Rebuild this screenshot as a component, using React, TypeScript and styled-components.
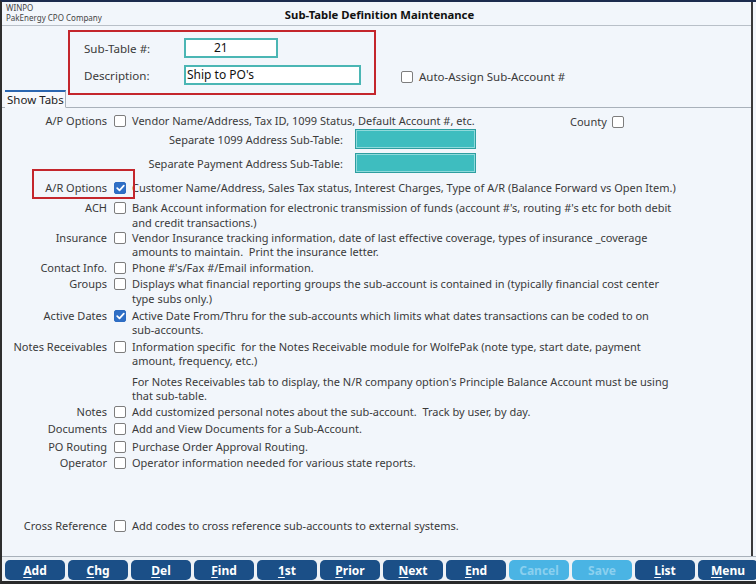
import React from 'react';
import styled, { createGlobalStyle } from 'styled-components';

const GlobalStyle = createGlobalStyle`
  html, body {
    margin: 0;
    padding: 0;
    background: #e9ecef;
  }
  body {
    font-family: "Noto Sans", "Open Sans", sans-serif;
    font-size: 11px;
    color: #3a3a3a;
  }
`;

const Window = styled.div`
  width: 756px;
  height: 584px;
  display: flex;
  flex-direction: column;
  box-sizing: border-box;
  border-top: 2px solid #1c2c4e;
  border-left: 2px solid #2e2e2e;
  border-bottom: 3px solid #2a2a2a;
  background: #f2f6fb;
  overflow: hidden;
`;

const Pane = styled.div`
  flex: 1;
  display: flex;
  flex-direction: column;
  width: 749px;
  border-right: 2px solid #3a3a3a;
  background: #f2f6fb;
`;

const Header = styled.div`
  height: 23px;
  position: relative;
  display: flex;
  align-items: center;
  justify-content: center;
  border-bottom: 1px solid #b9c0c8;
`;

const Company = styled.div`
  position: absolute;
  left: 4px;
  top: 1px;
  font-size: 8px;
  line-height: 10px;
  color: #444;
`;

const Title = styled.div`
  font-weight: 700;
  font-size: 11.3px;
  color: #111;
  margin: 2px 0 0 6px;
`;

const TopArea = styled.div`
  height: 81px;
  display: flex;
  align-items: flex-start;
  border-bottom: 1px solid #a9b1ba;
`;

const Tab = styled.div`
  align-self: flex-end;
  margin-left: 3px;
  margin-bottom: -1px;
  width: 61px;
  height: 18px;
  box-sizing: border-box;
  border-top: 2px solid #2a66b0;
  border-right: 1px solid #a9b1ba;
  border-bottom: 1px solid #f2f6fb;
  background: #f7f9fc;
  font-size: 11.5px;
  line-height: 16px;
  padding-left: 2px;
  color: #222;
`;

const HighlightBox = styled.div`
  margin: 4px 0 0 2px;
  width: 308px;
  height: 65px;
  box-sizing: border-box;
  border: 2px solid #c4262c;
  padding: 6px 0 0 14px;
  display: grid;
  grid-template-columns: 100px auto;
  grid-auto-rows: 20px;
  row-gap: 7px;
  align-items: center;
`;

const FieldLabel = styled.span`
  font-size: 11.6px;
  color: #3a3a3a;
`;

const TextInput = styled.div<{ $w: number; $center?: boolean }>`
  width: ${p => p.$w}px;
  height: 20px;
  box-sizing: border-box;
  border: 2px solid #4bb6b4;
  background: #fff;
  font-size: 12px;
  line-height: 16px;
  padding-left: ${p => (p.$center ? '28px' : '1px')};
  color: #111;
`;

const AutoAssign = styled.label`
  margin: 43px 0 0 25px;
  display: flex;
  align-items: center;
  gap: 6px;
  font-size: 11.5px;
  color: #3a3a3a;
`;

const Content = styled.div`
  flex: 1;
  display: flex;
  flex-direction: column;
`;

const Row = styled.div<{ $mt: number }>`
  position: relative;
  margin-top: ${p => p.$mt}px;
  display: grid;
  grid-template-columns: 106px 12px auto;
  column-gap: 6px;
  align-items: start;
  line-height: 14.5px;
`;

const Label = styled.span`
  text-align: right;
  white-space: nowrap;
  padding-right: 1px;
`;

const Desc = styled.span`
  white-space: pre;
`;

const BoxCell = styled.span`
  display: flex;
  height: 14.5px;
  align-items: center;
`;

const Box = styled.span<{ $on?: boolean }>`
  width: 12px;
  height: 12px;
  box-sizing: border-box;
  border-radius: 2px;
  border: 1px solid ${p => (p.$on ? '#2d6cc2' : '#7d7d7d')};
  background: ${p => (p.$on ? '#2f6fc6' : '#fff')};
  display: flex;
  align-items: center;
  justify-content: center;
  flex-shrink: 0;
`;

const County = styled.span`
  position: absolute;
  left: 568px;
  top: 1px;
  display: flex;
  align-items: center;
  gap: 5px;
`;

const SubTableRow = styled.div<{ $mt: number }>`
  margin-top: ${p => p.$mt}px;
  display: grid;
  grid-template-columns: 341px 121px;
  column-gap: 12px;
  align-items: center;
  height: 20px;
`;

const SubLabel = styled.span`
  text-align: right;
  font-size: 11px;
`;

const TealField = styled.div`
  height: 20px;
  box-sizing: border-box;
  background: #3ebdbf;
  border: 2px solid #8fdadb;
  outline: 1px solid #2e9ea0;
  outline-offset: -1px;
`;

const RedMark = styled.div`
  position: absolute;
  left: 30px;
  top: -12px;
  width: 103px;
  height: 30px;
  box-sizing: border-box;
  border: 2px solid #c4262c;
  pointer-events: none;
`;

const Footer = styled.div`
  height: 25px;
  border-top: 1px solid #a9b1ba;
  background: #eef2f6;
  display: flex;
  gap: 3px;
  padding: 3px 0 0 3px;
  box-sizing: border-box;
`;

const Btn = styled.div<{ $off?: boolean }>`
  flex: 0 0 60px;
  height: 20px;
  border-radius: 5px;
  background: ${p => (p.$off ? '#4ab4e4' : '#1b4f87')};
  color: ${p => (p.$off ? '#8bd0ef' : '#fff')};
  font-weight: 700;
  font-size: 12px;
  line-height: 21px;
  text-align: center;
  u { text-decoration-thickness: 1px; text-underline-offset: 2px; }
`;

const Check = () => (
  <svg width="9" height="8" viewBox="0 0 9 8">
    <path d="M1.2 4.2 L3.5 6.4 L7.8 1.6" fill="none" stroke="#fff" strokeWidth="1.7" strokeLinecap="round" strokeLinejoin="round" />
  </svg>
);

const CheckBox = ({ on }: { on?: boolean }) => <Box $on={on}>{on && <Check />}</Box>;

type Opt = { mt: number; label: string; text: string; on?: boolean; box?: boolean };

const options: Opt[] = [
  { mt: 8, label: 'A/R Options', on: true, text: 'Customer Name/Address, Sales Tax status, Interest Charges, Type of A/R (Balance Forward vs Open Item.)' },
  { mt: 5.5, label: 'ACH', text: "Bank Account information for electronic transmission of funds (account #'s, routing #'s etc for both debit\nand credit transactions.)" },
  { mt: 0.5, label: 'Insurance', text: 'Vendor Insurance tracking information, date of last effective coverage, types of insurance _coverage\namounts to maintain.  Print the insurance letter.' },
  { mt: 1, label: 'Contact Info.', text: "Phone #'s/Fax #/Email information." },
  { mt: 2, label: 'Groups', text: 'Displays what financial reporting groups the sub-account is contained in (typically financial cost center\ntype subs only.)' },
  { mt: 2.75, label: 'Active Dates', on: true, text: 'Active Date From/Thru for the sub-accounts which limits what dates transactions can be coded to on\nsub-accounts.' },
  { mt: 1.75, label: 'Notes Receivables', text: 'Information specific  for the Notes Receivable module for WolfePak (note type, start date, payment\namount, frequency, etc.)' },
  { mt: 6, label: '', box: false, text: "For Notes Receivables tab to display, the N/R company option's Principle Balance Account must be using\nthat sub-table." },
  { mt: 1, label: 'Notes', text: 'Add customized personal notes about the sub-account.  Track by user, by day.' },
  { mt: 3, label: 'Documents', text: 'Add and View Documents for a Sub-Account.' },
  { mt: 3, label: 'PO Routing', text: 'Purchase Order Approval Routing.' },
  { mt: 1.5, label: 'Operator', text: 'Operator information needed for various state reports.' },
  { mt: 48.75, label: 'Cross Reference', text: 'Add codes to cross reference sub-accounts to external systems.' },
];

const buttons: { k: string; rest: string; off?: boolean }[] = [
  { k: 'A', rest: 'dd' },
  { k: 'C', rest: 'hg' },
  { k: 'D', rest: 'el' },
  { k: 'F', rest: 'ind' },
  { k: '1', rest: 'st' },
  { k: 'P', rest: 'rior' },
  { k: 'N', rest: 'ext' },
  { k: 'E', rest: 'nd' },
  { k: '', rest: 'Cancel', off: true },
  { k: '', rest: 'Save', off: true },
  { k: 'L', rest: 'ist' },
  { k: 'M', rest: 'enu' },
];

export default function App() {
  return (
    <>
      <GlobalStyle />
      <Window>
        <Pane>
          <Header>
            <Company>
              WINPO
              <br />
              PakEnergy CPO Company
            </Company>
            <Title>Sub-Table Definition Maintenance</Title>
          </Header>

          <TopArea>
            <Tab>Show Tabs</Tab>
            <HighlightBox>
              <FieldLabel>Sub-Table #:</FieldLabel>
              <TextInput $w={94} $center>21</TextInput>
              <FieldLabel>Description:</FieldLabel>
              <TextInput $w={177}>Ship to PO's</TextInput>
            </HighlightBox>
            <AutoAssign>
              <CheckBox />
              Auto-Assign Sub-Account #
            </AutoAssign>
          </TopArea>

          <Content>
            <Row $mt={5.75}>
              <Label>A/P Options</Label>
              <BoxCell>
                <CheckBox />
              </BoxCell>
              <Desc>Vendor Name/Address, Tax ID, 1099 Status, Default Account #, etc.</Desc>
              <County>
                County <CheckBox />
              </County>
            </Row>
            <SubTableRow $mt={0.75}>
              <SubLabel>Separate 1099 Address Sub-Table:</SubLabel>
              <TealField />
            </SubTableRow>
            <SubTableRow $mt={4}>
              <SubLabel>Separate Payment Address Sub-Table:</SubLabel>
              <TealField />
            </SubTableRow>
            {options.map((o, i) => (
              <Row key={i} $mt={o.mt}>
                <Label>{o.label}</Label>
                <BoxCell>{o.box !== false && <CheckBox on={o.on} />}</BoxCell>
                <Desc>{o.text}</Desc>
                {o.label === 'A/R Options' && <RedMark />}
              </Row>
            ))}
          </Content>
        </Pane>

        <Footer>
          {buttons.map(b => (
            <Btn key={b.rest} $off={b.off}>
              {b.k && <u>{b.k}</u>}
              {b.rest}
            </Btn>
          ))}
        </Footer>
      </Window>
    </>
  );
}
